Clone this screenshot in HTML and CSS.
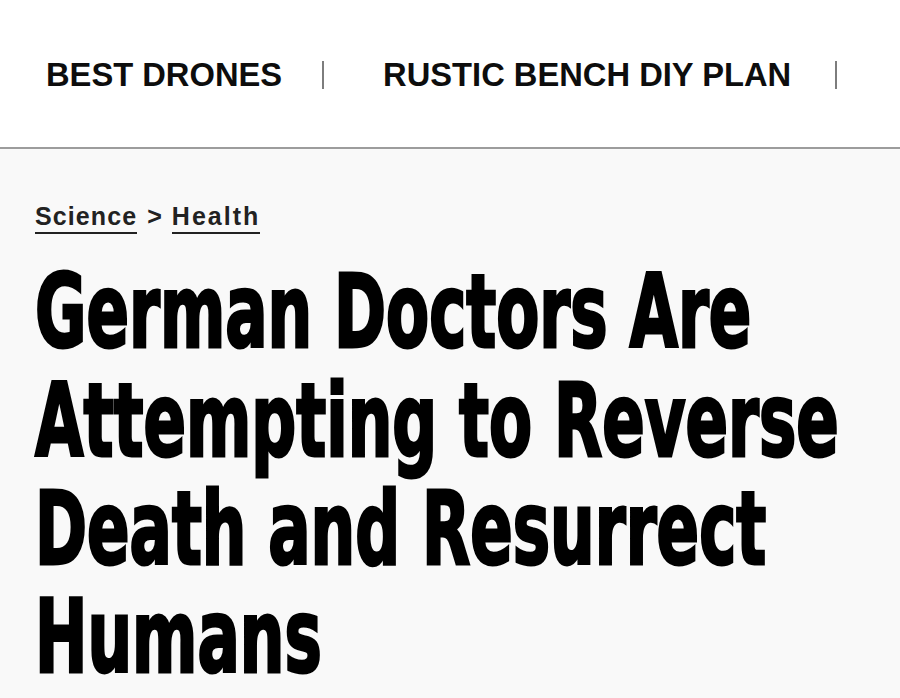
FILE: index.html
```html
<!DOCTYPE html>
<html lang="en">
<head>
<meta charset="utf-8">
<title>German Doctors Are Attempting to Reverse Death and Resurrect Humans</title>
<link rel="stylesheet" href="styles.css">
</head>
<body>
<header class="topbar">
  <nav class="trending">
    <a class="trend-link" href="#">BEST DRONES</a>
    <span class="trend-sep"></span>
    <a class="trend-link" href="#">RUSTIC BENCH DIY PLAN</a>
    <span class="trend-sep trend-sep-last"></span>
  </nav>
</header>
<main class="article">
  <div class="crumbs">
    <a class="crumb" href="#">Science</a>
    <span class="crumb-arrow">&gt;</span>
    <a class="crumb crumb-wide" href="#">Health</a>
  </div>
  <h1 class="headline">German Doctors Are Attempting to Reverse Death and Resurrect Humans</h1>
</main>
</body>
</html>
```

FILE: styles.css
```css
html, body {
  margin: 0;
  padding: 0;
}
body {
  background: #f9f9f9;
  min-height: 698px;
  font-family: "Liberation Sans", Arial, sans-serif;
  color: #111;
}
a {
  color: inherit;
  text-decoration: none;
}
.topbar {
  background: #ffffff;
  height: 147px;
  border-bottom: 2px solid #9c9c9c;
  display: flex;
  align-items: center;
}
.trending {
  display: flex;
  align-items: center;
  padding-left: 46px;
  padding-top: 2px;
}
.trend-link {
  font-size: 32.7px;
  font-weight: 700;
  color: #0d0d0d;
  white-space: nowrap;
}
.trend-sep {
  display: block;
  width: 2px;
  height: 28px;
  background: #7d7d7d;
  margin: 0 59px 0 40px;
}
.trend-sep-last {
  margin-left: 44px;
}
.article {
  padding: 52px 0 150px 35px;
}
.crumbs {
  display: flex;
  align-items: flex-start;
  font-size: 25px;
  font-weight: 700;
  line-height: 30px;
  color: #222;
}
.crumb {
  display: block;
  padding-bottom: 1px;
  border-bottom: 2px solid #222;
  letter-spacing: 1.1px;
}
.crumb-wide {
  letter-spacing: 2px;
}
.crumb-arrow {
  display: block;
  margin: 0 10px 0 10px;
}
.headline {
  margin: 25px 0 0 0;
  font-family: "DejaVu Sans Condensed", "DejaVu Sans", sans-serif;
  font-stretch: condensed;
  font-weight: 700;
  font-size: 69.7px;
  line-height: 74.5px;
  color: #000;
  -webkit-text-stroke: 2px #000;
  transform: scaleY(1.45);
  transform-origin: left top;
}
```
